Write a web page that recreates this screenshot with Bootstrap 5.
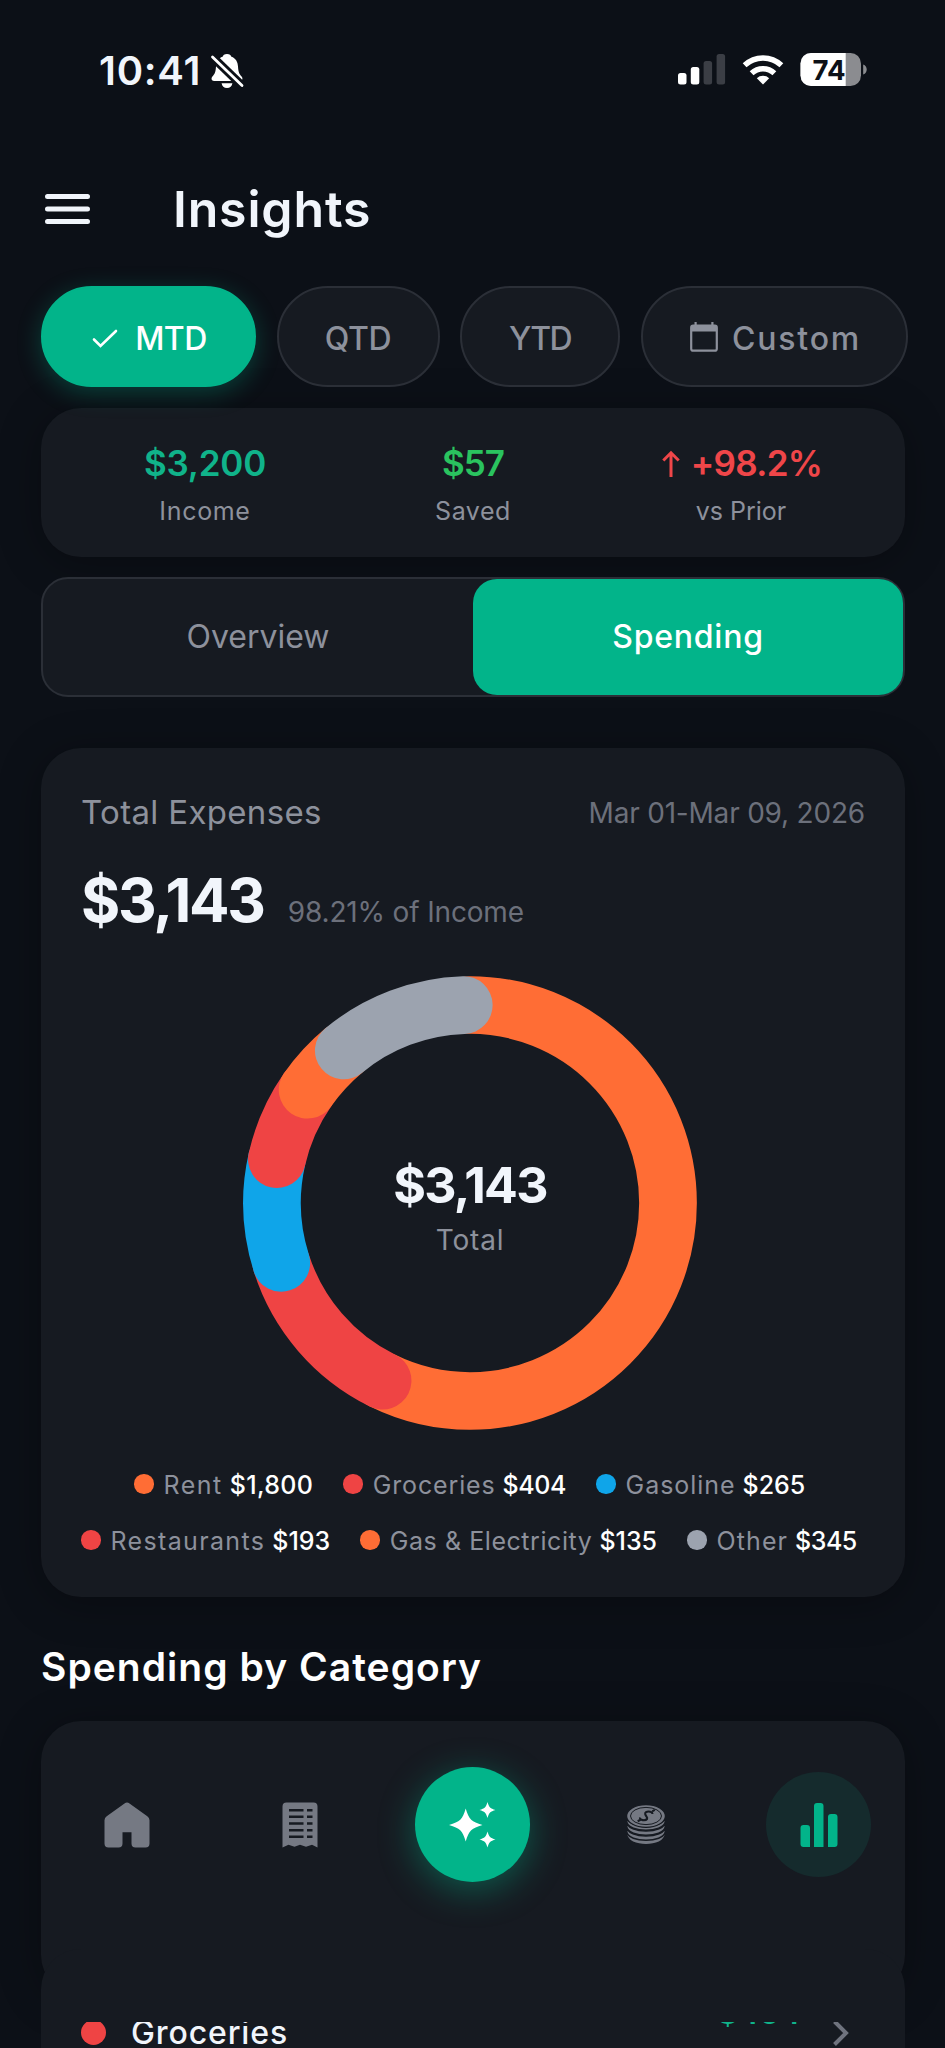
<!DOCTYPE html>
<html lang="en" data-bs-theme="dark">
<head>
<meta charset="utf-8">
<meta name="viewport" content="width=device-width, initial-scale=1">
<title>Insights</title>
<link href="https://cdn.jsdelivr.net/npm/bootstrap@5.3.0/dist/css/bootstrap.min.css" rel="stylesheet">
<style>
:root{--bg:#0c1017;--panel:#161a21;--line:#2b2f37;--accent:#02b48a;--ink:#f1f5fb;--mut:#8d919c;--dim:#6c707b;--orange:#ff6d35;--red:#ef4444;--blue:#0fa5e9;--grey:#9ca3af}
body{background:var(--bg);color:var(--ink);font-family:Inter,"Noto Sans",sans-serif;line-height:1;width:945px;height:2048px;overflow:hidden;position:relative}
svg{display:block;flex:none}
.screen{padding:0 40px 0 41px}
.status{height:141px;padding:0 77px 0 100px}
.clock{font-size:40px;font-weight:600;letter-spacing:.77px;margin-left:-1px}
.topbar{height:145px;padding:4px 4px 14px}
.title{font-size:50px;font-weight:600;letter-spacing:.84px;margin-left:83px}
.pills{gap:20.5px;width:866px}
.pill{height:101px;border-radius:51px;border:2px solid var(--line);background:var(--panel);color:var(--mut);font-size:32px;font-weight:500;padding-top:4px;flex:none}
.pill.on{background:var(--accent);border-color:var(--accent);color:#fff;box-shadow:0 6px 24px rgba(2,180,138,.3)}
.panel{background:var(--panel);border-radius:40px;box-shadow:0 6px 44px rgba(0,0,0,.3)}
.sum{height:149px;margin-top:21px;padding:38px 30px 0}
.num{font-size:35px;font-weight:600;height:36px}
.cap{font-size:25px;color:var(--mut);margin-top:17px}
.seg{height:120px;margin-top:20px;border:2px solid var(--line);border-radius:27px;background:var(--panel);font-size:32px;color:var(--mut)}
.seg>div{flex:1 1 0}
.seg .on{background:var(--accent);color:#fff;font-weight:500;border-radius:24px}
.spend{height:849px;margin-top:51px;padding:48px 40px 0}
.big{font-size:60px;font-weight:700;letter-spacing:-2.3px}
.dimt{font-size:28px;color:var(--dim)}
.donut{width:460px;height:460px;margin:43px 0 0 159px;position:relative}
.donut circle{fill:none;stroke-width:57.7;stroke-linecap:round}
.hub{position:absolute;inset:0;padding-top:187px}
.leg{font-size:25px;color:var(--mut);height:25px;gap:30px}
.leg>div{display:flex;align-items:center}
.leg i{width:19.5px;height:19.5px;border-radius:50%;margin:-3px 10px 0 0}
.leg b{font-weight:500;color:#fff;margin-left:7px}
h2.sec{font-size:39px;font-weight:600;letter-spacing:1.03px;line-height:40px;margin:50px 0 34px}
.cat{height:274px}
.cat+.cat{margin-top:-46px;height:99px;border-radius:40px 40px 0 0;box-shadow:none}
.row-in{padding:68px 40px 0}
.tabs{position:absolute;left:41px;top:1740px;width:864px;height:282px;padding-top:27px;background:linear-gradient(var(--panel),var(--panel)) center/780px 100% no-repeat}
.tabs>div{width:172.8px;height:115px}
.fab{width:115px;height:115px;border-radius:50%;background:var(--accent);box-shadow:0 8px 36px rgba(2,180,138,.42)}
.act{width:105px;height:105px;border-radius:50%;background:#152b2d}
</style>
</head>
<body>
<div class="status d-flex align-items-center">
  <span class="clock">10:41</span>
  <svg class="ms-2" style="margin-top:1px" width="36" height="36" viewBox="0 0 36 36"><path fill="#fff" d="M18 1c2.600 0 4 1.300 4.400 2.800 4.200 1.300 6.300 5 6.600 9.600.3 6 1.600 7.600 3.600 10.200 1.600 2 .8 4.400-1.600 4.400H5c-2.400 0-3.200-2.400-1.600-4.400C5.400 21 6.700 19.400 7 13.400c.3-4.600 2.400-8.300 6.600-9.600C14 2.300 15.400 1 18 1zM12.600 30.200h10.800C23 33 21 35 18 35s-5-2-5.400-4.800z"/><path stroke="#0c1017" stroke-width="8.500" d="M2 2.500l32 31"/><path stroke="#fff" stroke-width="2.800" stroke-linecap="round" d="M3.500 4L33 32.500"/></svg>
  <svg class="ms-auto" style="margin-top:-1px" width="190" height="36" viewBox="0 0 190 36">
    <g fill="#fff"><rect x="0" y="21" width="8.500" height="11.500" rx="2.500"/><rect x="12.800" y="15" width="8.500" height="17.500" rx="2.500"/><g fill="#3b3e45"><rect x="25.600" y="9" width="8.500" height="23.500" rx="2.500"/><rect x="38.600" y="2" width="8.500" height="30.500" rx="2.500"/></g></g>
    <path fill="#fff" d="M85 32.500l-6.200-6.300a9 9 0 0 1 12.400 0z"/>
    <g fill="none" stroke="#fff" stroke-width="5.500"><path d="M73.600 21.200a16.500 16.500 0 0 1 22.800 0M66.600 13.200a26.800 26.800 0 0 1 36.800 0"/></g>
    <clipPath id="bt"><rect x="122.500" y="1" width="60.500" height="33" rx="10.500"/></clipPath>
    <g clip-path="url(#bt)"><path fill="#8b8c90" d="M122 0h62v36h-62z"/><path fill="#fff" d="M122 0h45.700v36H122z"/></g>
    <path fill="#8b8c90" d="M185.200 12.500c2.400.8 3.500 2.800 3.500 5s-1.100 4.200-3.500 5z"/>
    <text x="134.500" y="27.500" font-family="Inter" font-size="27.500" font-weight="700" fill="#0c1017">74</text>
  </svg>
</div>
<div class="screen">
  <div class="topbar d-flex align-items-center">
    <svg width="45" height="32" viewBox="0 0 45 32"><path stroke="#f1f5fb" stroke-width="5" stroke-linecap="round" d="M2.500 3.500h40M2.500 16h40M2.500 28.600h40"/></svg>
    <span class="title">Insights</span>
  </div>
  <div class="pills d-flex">
    <div class="pill on d-flex align-items-center justify-content-center" style="width:215px"><svg width="26" height="21" viewBox="0 0 26 21" style="margin-right:17px"><path fill="none" stroke="#fff" stroke-width="2.600" stroke-linecap="round" d="M2 11.500l6.500 6.500L24 3"/></svg><span style="letter-spacing:-.5px;margin-right:-2px">MTD</span></div>
    <div class="pill d-flex align-items-center justify-content-center" style="width:163px;letter-spacing:-.3px">QTD</div>
    <div class="pill d-flex align-items-center justify-content-center" style="width:160px;letter-spacing:-1.600px">YTD</div>
    <div class="pill d-flex align-items-center justify-content-center" style="width:267px"><svg width="28" height="30" viewBox="0 0 28 30" style="margin:-4px 14px 0 0"><rect x="1.200" y="3.700" width="25.600" height="25" rx="2" fill="none" stroke="#8d919c" stroke-width="2.200"/><path fill="#8d919c" d="M1 4h26v5.500H1zM4.500 0h2.200v4H4.500zM21.300 0h2.200v4h-2.200z"/></svg><span style="letter-spacing:1.750px;margin-right:-3px">Custom</span></div>
  </div>
  <div class="panel sum d-flex text-center">
    <div class="col"><div class="num" style="color:#10b38a;letter-spacing:-.2px">$3,200</div><div class="cap" style="letter-spacing:.67px">Income</div></div>
    <div class="col"><div class="num" style="color:#2ac35f;letter-spacing:-.9px">$57</div><div class="cap" style="letter-spacing:.54px">Saved</div></div>
    <div class="col"><div class="num d-flex justify-content-center" style="color:#ef4649;letter-spacing:-.7px;padding-left:2px"><svg width="18" height="28" viewBox="0 0 18 28" style="margin:4px 11px 0 0"><path fill="none" stroke="#ef4649" stroke-width="3" d="M9 27V3M1.300 10.500L9 2.800l7.700 7.700"/></svg>+98.2%</div><div class="cap">vs Prior</div></div>
  </div>
  <div class="seg d-flex">
    <div class="d-flex align-items-center justify-content-center">Overview</div>
    <div class="on d-flex align-items-center justify-content-center" style="letter-spacing:.77px">Spending</div>
  </div>
  <div class="panel spend">
    <div class="d-flex justify-content-between align-items-center"><span style="font-size:33px;color:var(--mut);letter-spacing:.33px">Total Expenses</span><span class="dimt" style="letter-spacing:-.2px">Mar 01-Mar 09, 2026</span></div>
    <div class="d-flex align-items-baseline" style="margin-top:41px"><span class="big">$3,143</span><span class="dimt" style="margin-left:24px;letter-spacing:-.16px">98.21% of Income</span></div>
    <div class="donut">
      <svg width="460" height="460" viewBox="-230 -230 460 460"><g transform="rotate(-90)">
        <circle r="198" stroke="#ff6d35" pathLength="360" stroke-dasharray="206.200 360"/>
        <circle r="198" stroke="#ef4444" pathLength="360" stroke-dasharray="46.200 360" transform="rotate(206.200)"/>
        <circle r="198" stroke="#0fa5e9" pathLength="360" stroke-dasharray="30.400 360" transform="rotate(252.400)"/>
        <circle r="198" stroke="#ef4444" pathLength="360" stroke-dasharray="22.100 360" transform="rotate(282.800)"/>
        <circle r="198" stroke="#ff6d35" pathLength="360" stroke-dasharray="15.500 360" transform="rotate(304.900)"/>
        <circle r="198" stroke="#9ca3af" pathLength="360" stroke-dasharray="37.800 360" transform="rotate(320.400)"/>
      </g></svg>
      <div class="hub text-center"><div style="font-size:50px;font-weight:700;letter-spacing:-1.700px">$3,143</div><div style="font-size:28px;color:var(--mut);margin-top:16px;letter-spacing:.83px">Total</div></div>
    </div>
    <div class="leg d-flex" style="margin:40px 0 31px 53px">
      <div><i style="background:var(--orange)"></i><span style="letter-spacing:1.500px">Rent</span><b style="letter-spacing:.33px">$1,800</b></div>
      <div><i style="background:var(--red)"></i><span style="letter-spacing:.85px">Groceries</span><b style="letter-spacing:-.4px">$404</b></div>
      <div><i style="background:var(--blue)"></i><span style="letter-spacing:.95px">Gasoline</span><b>$265</b></div>
    </div>
    <div class="leg d-flex">
      <div><i style="background:var(--red)"></i><span style="letter-spacing:1.350px">Restaurants</span><b>$193</b></div>
      <div><i style="background:var(--orange)"></i><span style="letter-spacing:.56px">Gas &amp; Electricity</span><b>$135</b></div>
      <div><i style="background:var(--grey)"></i><span style="letter-spacing:1.090px">Other</span><b style="letter-spacing:-.5px">$345</b></div>
    </div>
  </div>
  <h2 class="sec">Spending by Category</h2>
  <div class="panel cat"></div>
  <div class="panel cat row-in d-flex align-items-start">
    <i class="rounded-circle" style="width:25px;height:25px;background:var(--red);margin-top:3px"></i>
    <span style="font-size:32px;font-weight:500;letter-spacing:.88px;margin-left:25px">Groceries</span>
    <span class="ms-auto" style="font-size:33px;font-weight:600;letter-spacing:-1.070px;color:#10b38a;margin-top:-21px">$404</span>
    <svg width="18" height="26" viewBox="0 0 18 26" style="margin:3px 15px 0 32px"><path fill="none" stroke="#6f737e" stroke-width="4" d="M2.500 1.500L14 13 2.500 24.500"/></svg>
  </div>
</div>
<nav class="tabs d-flex">
  <div class="d-flex align-items-center justify-content-center"><svg width="46" height="46" viewBox="0 0 46 46"><path fill="#757983" d="M20.500 1.400a4 4 0 0 1 5 0L43.300 14.200A5 5 0 0 1 45.500 18.300V41.500a4 4 0 0 1-4 4H31.500a4 4 0 0 1-4-4V30.300H18.500V41.500a4 4 0 0 1-4 4H4.500a4 4 0 0 1-4-4V18.300A5 5 0 0 1 2.700 14.200z"/></svg></div>
  <div class="d-flex align-items-center justify-content-center"><svg width="36" height="46" viewBox="0 0 36 46"><path fill="#757983" d="M4.500.5h27a4 4 0 0 1 4 4V45.500L30 42.800 24 44.800 18 42.800 12.500 44.800 6.500 42.800.5 45.500V4.500a4 4 0 0 1 4-4z"/><path stroke="#161a21" stroke-width="2.400" d="M7 8.200h14.500M25 8.200h5.500M7 14.800h14.500M25 14.800h5.500M7 21.500h14.500M25 21.500h5.500M7 28.200h14.500M25 28.200h5.500M7 34.800h14.500M25 34.800h5.500"/></svg></div>
  <div class="d-flex align-items-center justify-content-center"><div class="fab d-flex align-items-center justify-content-center"><svg width="47" height="46" viewBox="0 0 47 46"><path fill="#fff" d="M16.700 6.500C20 17.500 22.500 19.800 33.500 23 22.500 26.200 20 28.500 16.700 39.500 13.500 28.500 11 26.200 0 23 11 19.800 13.500 17.500 16.700 6.500zM38.500 0C40 5.200 41.300 6.500 46.500 8 41.300 9.500 40 10.800 38.500 16 37 10.800 35.700 9.500 30.500 8 35.700 6.500 37 5.200 38.500 0zM38.500 29.500C40 34.700 41.300 36 46.500 37.500 41.300 39 40 40.300 38.500 45.500 37 40.300 35.700 39 30.500 37.500 35.700 36 37 34.700 38.500 29.500z"/></svg></div></div>
  <div class="d-flex align-items-center justify-content-center"><svg width="38" height="40" viewBox="0 0 38 40"><g fill="#757983"><path d="M.3 28.500C4 35 34 35 37.700 28.500 37.500 42.500.5 42.500.3 28.500z"/><path stroke="#161a21" stroke-width="1.600" d="M-.3 22C1 33.800 37 33.800 38.300 22V27C36 38 2 38-.3 27z"/><path stroke="#161a21" stroke-width="1.600" d="M-.3 17C1 28.800 37 28.800 38.300 17V22C36 33 2 33-.3 22z"/><path stroke="#161a21" stroke-width="1.600" d="M-.3 12C1 23.800 37 23.800 38.300 12V17C36 28 2 28-.3 17z"/><ellipse cx="19" cy="11" rx="19.400" ry="11.400" stroke="#161a21" stroke-width="1.200"/></g><ellipse cx="19" cy="11" rx="15.500" ry="8.600" fill="none" stroke="#161a21" stroke-width="1"/><path fill="none" stroke="#161a21" stroke-width="2.100" d="M25.500 9C25.500 5.500 17.500 5.800 18.200 9 18.800 11.800 21 12 20 14 18.500 16 12.500 15.500 13 12.500M25.200 6.300l2.600-1.400M10.700 16.200l2.800-1.400"/></svg></div>
  <div class="d-flex align-items-center justify-content-center"><div class="act d-flex align-items-center justify-content-center"><svg width="38" height="46" viewBox="0 0 38 46"><path fill="#02b48a" d="M.5 26a3 3 0 0 1 3-3h3.500a3 3 0 0 1 3 3V45H3.500a3 3 0 0 1-3-3zM14 4a3 3 0 0 1 3-3h3.500a3 3 0 0 1 3 3V45H14zM28 15a3 3 0 0 1 3-3h3.500a3 3 0 0 1 3 3V42a3 3 0 0 1-3 3H28z"/></svg></div></div>
</nav>
<script src="https://cdn.jsdelivr.net/npm/bootstrap@5.3.0/dist/js/bootstrap.bundle.min.js"></script>
</body>
</html>
